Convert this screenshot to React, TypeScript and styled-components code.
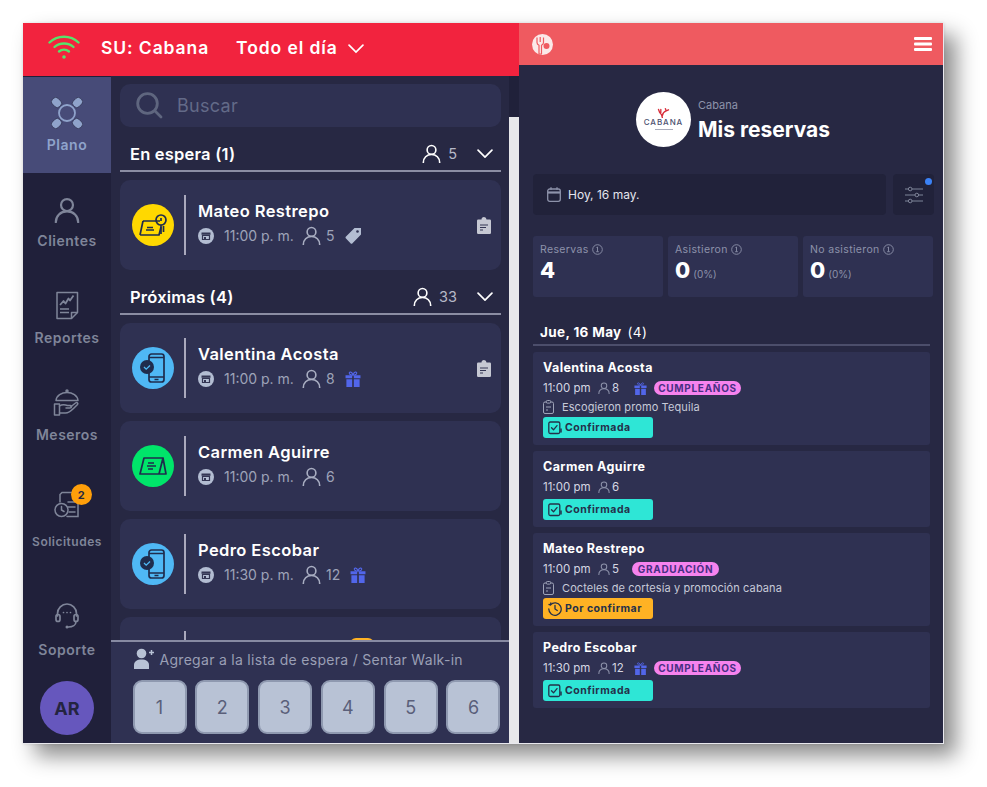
import React from 'react'
import styled, { createGlobalStyle } from 'styled-components'

const GlobalStyle = createGlobalStyle`
  html, body { margin: 0; padding: 0; background: #fff; }
  body { font-family: Inter, "Open Sans", sans-serif; }
  * { box-sizing: border-box; }
`

const Page = styled.div`
  width: 987px;
  height: 787px;
  padding: 23px 0 0 23px;
  overflow: hidden;
`

const Shell = styled.div`
  width: 921px;
  height: 721px;
  display: flex;
  border-right: 1px solid #e8e8ee;
  border-bottom: 1px solid #e8e8ee;
  box-shadow: 12px 12px 20px rgba(0, 0, 0, 0.45), 0 0 3px rgba(0, 0, 0, 0.12);
`

const LeftPanel = styled.section`
  width: 496px;
  display: flex;
  flex-direction: column;
  background: #20213a;
`

const TopBar = styled.header`
  height: 53px;
  flex: none;
  display: flex;
  align-items: center;
  padding: 0 0 5px 25px;
  background: #f2233e;
  color: #fff;
  font-weight: 600;
  font-size: 17.5px;
`

const TopLabel = styled.span<{ $left: number }>`
  margin-left: ${({ $left }) => $left}px;
  letter-spacing: 0.9px;
`

const Body = styled.div`
  flex: 1;
  min-height: 0;
  display: flex;
`

const Sidebar = styled.nav`
  width: 88px;
  flex: none;
  padding-top: 1px;
  display: flex;
  flex-direction: column;
  align-items: stretch;
  background: #20203a;
`

const NavItem = styled.div<{ $active?: boolean; $height: number; $small?: boolean; $gap: number; $pad: number }>`
  position: relative;
  height: ${({ $height }) => $height}px;
  padding-top: ${({ $pad }) => $pad}px;
  display: flex;
  flex-direction: column;
  align-items: center;
  justify-content: center;
  gap: ${({ $gap }) => $gap}px;
  font-size: ${({ $small }) => ($small ? 12 : 14)}px;
  font-weight: 600;
  letter-spacing: 0.5px;
  background: ${({ $active }) => ($active ? '#474b78' : 'transparent')};
  color: ${({ $active }) => ($active ? '#8fa3cb' : '#7f8599')};
`

const NavBadge = styled.span`
  position: absolute;
  top: 20px;
  left: 48px;
  width: 21px;
  height: 21px;
  border-radius: 50%;
  display: flex;
  align-items: center;
  justify-content: center;
  background: #ff9f0a;
  color: #272843;
  font-size: 11px;
  font-weight: 700;
`

const Avatar = styled.div`
  width: 54px;
  height: 54px;
  margin: auto auto 8px;
  border-radius: 50%;
  display: flex;
  align-items: center;
  justify-content: center;
  background: #6657bd;
  color: #24243f;
  font-size: 18px;
  font-weight: 700;
`

const MainColumn = styled.div`
  width: 398px;
  flex: none;
  display: flex;
  flex-direction: column;
  min-height: 0;
  background: #272843;
`

const ListArea = styled.div`
  flex: 1;
  min-height: 0;
  overflow: hidden;
  padding: 8px 8px 0 9px;
`

const SearchBox = styled.div`
  height: 43px;
  display: flex;
  align-items: center;
  gap: 14px;
  padding-left: 16px;
  border-radius: 10px;
  background: #2f3152;
  color: #636a88;
  font-size: 18px;
  letter-spacing: 0.3px;
`

const SectionHead = styled.div`
  height: 37px;
  margin-top: 8px;
  display: flex;
  align-items: center;
  padding: 2px 8px 0 10px;
  border-bottom: 2px solid #8b8da3;
  color: #fff;
`

const SectionTitle = styled.span`
  flex: 1;
  font-size: 16.5px;
  font-weight: 600;
  letter-spacing: 0.2px;
`

const SectionCount = styled.span`
  margin: 0 20px 0 7px;
  color: #b6b9c8;
  font-size: 14.5px;
`

const ReservationCard = styled.article`
  position: relative;
  height: 90px;
  margin-top: 8px;
  display: flex;
  align-items: center;
  padding: 0 10px 0 12px;
  border-radius: 10px;
  background: #2f3152;
`

const StatusDot = styled.div<{ $color: string }>`
  width: 42px;
  height: 42px;
  flex: none;
  border-radius: 50%;
  display: flex;
  align-items: center;
  justify-content: center;
  background: ${({ $color }) => $color};
`

const VLine = styled.div`
  width: 2px;
  height: 60px;
  flex: none;
  margin: 0 12px 0 10px;
  background: #aaa9bd;
`

const CardText = styled.div`
  flex: 1;
  display: flex;
  flex-direction: column;
  gap: 4px;
  padding-bottom: 4px;
`

const GuestName = styled.div`
  color: #fff;
  font-size: 16.5px;
  font-weight: 600;
  line-height: 21px;
  letter-spacing: 0.4px;
`

const GuestMeta = styled.div`
  display: flex;
  align-items: center;
  height: 20px;
  color: #9ea3b8;
  font-size: 14px;
`

const MetaTime = styled.span`
  width: 78px;
  margin-left: 10px;
  white-space: nowrap;
`

const MetaCount = styled.span`
  margin: 0 10px 0 5px;
`

const ClippedCard = styled(ReservationCard)`
  align-items: flex-start;
  padding-top: 14px;
`

const PeekPill = styled.span`
  position: absolute;
  left: 230px;
  top: 21px;
  width: 24px;
  height: 12px;
  border-radius: 6px;
  background: #ffb224;
`

const Scrollbar = styled.div`
  width: 10px;
  flex: none;
  margin-top: 41px;
  background: #e7e7ea;
`

const Footer = styled.div`
  height: 103px;
  flex: none;
  padding: 5px 8px 0 21.5px;
  border-top: 2px solid #878aa2;
  background: #2f3152;
`

const FooterLabel = styled.div`
  height: 24px;
  display: flex;
  align-items: center;
  gap: 5px;
  color: #9a9fb5;
  font-size: 14px;
  letter-spacing: 0.29px;
  white-space: nowrap;
`

const TableRow = styled.div`
  margin-top: 9px;
  display: flex;
  gap: 8.8px;
`

const TableButton = styled.div`
  width: 54px;
  height: 54px;
  padding-top: 1px;
  display: flex;
  align-items: center;
  justify-content: center;
  border: 2px solid #8f99b0;
  border-radius: 9px;
  background: #b8c2d5;
  color: #5a5f7a;
  font-size: 18px;
`

const RightPanel = styled.section`
  flex: 1;
  display: flex;
  flex-direction: column;
  background: #272843;
`

const RightBar = styled.header`
  height: 42px;
  flex: none;
  display: flex;
  align-items: center;
  justify-content: space-between;
  padding: 0 11px 0 13px;
  background: #ef5a60;
`

const RightBody = styled.div`
  padding: 27px 9px 0 14px;
`

const Hero = styled.div`
  display: flex;
  align-items: center;
  gap: 7px;
  margin-left: 103px;
`

const LogoCircle = styled.div`
  width: 55px;
  height: 55px;
  flex: none;
  border-radius: 50%;
  display: flex;
  flex-direction: column;
  align-items: center;
  padding-top: 15px;
  background: #fff;
  color: #4c5170;
  font-size: 8px;
  font-weight: 500;
  letter-spacing: 0.9px;
  line-height: 9px;

  &::after {
    content: '';
    width: 18px;
    height: 1px;
    margin-top: 2px;
    background: #a9acbb;
  }
`

const HeroText = styled.div`
  margin-top: 2px;
`

const HeroSub = styled.div`
  color: #8d92aa;
  font-size: 11px;
`

const HeroTitle = styled.h1`
  margin: 5px 0 0;
  color: #fff;
  font-size: 21px;
  font-weight: 700;
  line-height: 26px;
`

const FilterRow = styled.div`
  display: flex;
  gap: 7px;
  margin-top: 27px;
`

const DateField = styled.div`
  width: 353px;
  height: 41px;
  display: flex;
  align-items: center;
  gap: 7px;
  padding-left: 14px;
  border-radius: 4px;
  background: #21223a;
  color: #e4e5ee;
  font-size: 12px;
`

const FilterButton = styled.div`
  position: relative;
  width: 41px;
  height: 41px;
  display: flex;
  align-items: center;
  justify-content: center;
  border-radius: 4px;
  background: #21223a;
`

const BlueDot = styled.span`
  position: absolute;
  top: 4px;
  right: 2px;
  width: 7px;
  height: 7px;
  border-radius: 50%;
  background: #3b82f6;
`

const StatsRow = styled.div`
  display: flex;
  gap: 5px;
  margin-top: 21px;
`

const StatCard = styled.div`
  width: 130px;
  height: 61px;
  padding: 7px 7px 0;
  border-radius: 3px;
  background: #2f3152;
`

const StatLabel = styled.div`
  display: flex;
  align-items: center;
  gap: 3px;
  color: #8d92aa;
  font-size: 10.5px;
  letter-spacing: 0.35px;
  line-height: 13px;
`

const StatValue = styled.div`
  margin-top: 2px;
  color: #fff;
  font-size: 22px;
  font-weight: 800;
  line-height: 24px;
  small {
    margin-left: 3px;
    color: #8d92aa;
    font-size: 10px;
    font-weight: 400;
  }
`

const DayHead = styled.div`
  height: 27px;
  width: 397px;
  margin-top: 22px;
  padding: 3px 0 0 7px;
  border-bottom: 2px solid #4c4e6b;
  color: #fff;
  font-size: 13.5px;
  font-weight: 700;
  letter-spacing: 0.35px;
  line-height: 20px;
  span {
    margin-left: 6px;
    font-weight: 400;
  }
`

const BookingList = styled.div`
  width: 397px;
  margin-top: 6px;
  display: flex;
  flex-direction: column;
  gap: 6px;
`

const Booking = styled.article`
  padding: 8px 10px 7px;
  border-radius: 3px;
  background: #2f3152;
`

const BookingName = styled.div`
  color: #fff;
  font-size: 12.5px;
  font-weight: 700;
  letter-spacing: 0.4px;
  line-height: 15px;
`

const BookingMeta = styled.div`
  height: 20px;
  margin-top: 3px;
  display: flex;
  align-items: center;
  color: #d5d7e2;
  font-size: 11.5px;
`

const BookingTime = styled.span`
  width: 55px;
  white-space: nowrap;
`

const BookingCount = styled.span<{ $width: number }>`
  width: ${({ $width }) => $width}px;
  margin-left: 2px;
`

const EventPill = styled.span`
  min-width: 87px;
  height: 14px;
  margin-left: 7px;
  padding: 0 4px;
  display: flex;
  align-items: center;
  justify-content: center;
  border-radius: 7px;
  background: #f683ee;
  color: #4a2f84;
  font-size: 10px;
  font-weight: 700;
  letter-spacing: 0.7px;
`

const BookingNote = styled.div`
  height: 17px;
  display: flex;
  align-items: center;
  gap: 8px;
  color: #c7cad8;
  font-size: 11px;
  letter-spacing: 0.1px;
`

const StatusBadge = styled.div<{ $color: string }>`
  width: 110px;
  height: 21px;
  margin-top: 2px;
  padding-left: 5px;
  display: flex;
  align-items: center;
  gap: 3px;
  border-radius: 3px;
  background: ${({ $color }) => $color};
  color: #24304a;
  font-size: 10.5px;
  font-weight: 700;
  letter-spacing: 0.5px;
`

type IconProps = { size?: number; color?: string }

const UserIcon = ({ size = 20, color = '#fff' }: IconProps) => (
  <svg width={size} height={size} viewBox="0 0 20 20" fill="none" stroke={color} strokeWidth="1.7">
    <circle cx="10" cy="6.2" r="4.6" />
    <path d="M1.4 19.5c0-5 3.6-8.4 8.6-8.4s8.6 3.4 8.6 8.4" strokeLinecap="round" />
  </svg>
)

const Chevron = ({ size = 16 }: IconProps) => (
  <svg width={size} height={size * 0.62} viewBox="0 0 16 10" fill="none" stroke="#fff" strokeWidth="1.7" strokeLinecap="round">
    <path d="M1 1.2l7 7 7-7" />
  </svg>
)

const WifiIcon = () => (
  <svg width="32" height="26" viewBox="0 0 32 26" fill="none" stroke="#56e36b" strokeWidth="2.4" strokeLinecap="round">
    <path d="M1.5 8.5C9.5 .8 22.500 .8 30.500 8.500" />
    <path d="M6.500 13C11.500 8.300 20.500 8.300 25.500 13" />
    <path d="M11 17.500c2.800-2.500 7.200-2.500 10 0" />
    <circle cx="16" cy="23" r="1.800" fill="#56e36b" stroke="none" />
  </svg>
)

const SearchIcon = () => (
  <svg width="27" height="27" viewBox="0 0 27 27" fill="none" stroke="#5f667f" strokeWidth="2.800" strokeLinecap="round">
    <circle cx="11.500" cy="11.500" r="9.800" />
    <path d="M19 19l6 6" />
  </svg>
)

const TableIcon = () => (
  <svg width="32" height="32" viewBox="0 0 32 32" fill="none" stroke="#8fa3cb" strokeWidth="1.800">
    <circle cx="16" cy="16" r="8" />
    <g fill="#8fa3cb" stroke="#20203a" strokeWidth=".6">
      <rect x="-5" y="-4" width="10" height="8" rx="3" transform="translate(5.500 5.500) rotate(45)" />
      <rect x="-5" y="-4" width="10" height="8" rx="3" transform="translate(26.500 5.500) rotate(-45)" />
      <rect x="-5" y="-4" width="10" height="8" rx="3" transform="translate(5.500 26.500) rotate(-45)" />
      <rect x="-5" y="-4" width="10" height="8" rx="3" transform="translate(26.500 26.500) rotate(45)" />
    </g>
  </svg>
)

const ReportIcon = () => (
  <svg width="24" height="29" viewBox="0 0 24 29" fill="none" stroke="#7f8599" strokeWidth="1.500" strokeLinejoin="round">
    <path d="M2 1.500h20.500v20l-6 6H2z" />
    <path d="M16.500 27.500v-6h6" />
    <path d="M5 14l3.500-4 2 2.500 3-5 1.500 2 3.500-5" strokeWidth="1.800" />
    <path d="M5 18h9M5 21.500h9" />
  </svg>
)

const WaiterIcon = () => (
  <svg width="28" height="28" viewBox="0 0 28 28" fill="none" stroke="#7f8599" strokeWidth="1.500" strokeLinecap="round" strokeLinejoin="round">
    <path d="M3 11.500C3.500 6.500 8.500 3.500 14 3.500s10.500 3 11 8z" />
    <circle cx="14" cy="2" r="1" />
    <path d="M1.500 15h5v11h-5z" />
    <path d="M6.500 17c3-2 5-1.500 8-.5h3c1.500 0 1.500 2.500-.500 2.500h-4" />
    <path d="M6.500 24h6c3 0 5.500-2 8-4.500l4-4c1-1.500-.5-2.500-2-1.500l-5 4" />
  </svg>
)

const RequestIcon = () => (
  <svg width="26" height="27" viewBox="0 0 26 27" fill="none" stroke="#7f8599" strokeWidth="1.500" strokeLinecap="round">
    <path d="M6 11V3.500l2-2h16v24H13" />
    <path d="M14 11h7M14 16h7M15 21h6" />
    <circle cx="7.500" cy="19" r="6.500" />
    <path d="M7.500 15.500V19l2.500 1.500" />
  </svg>
)

const HeadsetIcon = () => (
  <svg width="24" height="26" viewBox="0 0 24 26" fill="none" stroke="#7f8599" strokeWidth="1.700" strokeLinecap="round">
    <path d="M2.500 13V10.500a9.500 9.500 0 0 1 19 0V13" />
    <rect x="1" y="11.500" width="4" height="7" rx="2" />
    <rect x="19" y="11.500" width="4" height="7" rx="2" />
    <path d="M21 18.500c0 3.500-3.500 5.500-7.500 5.500" />
    <circle cx="12" cy="24" r="1.500" fill="#7f8599" stroke="none" />
    <path d="M8.500 9.500h.01M12 9.500h.01M15.500 9.500h.01" />
  </svg>
)

const StoreIcon = () => (
  <svg width="16" height="16" viewBox="0 0 16 16">
    <circle cx="8" cy="8" r="8" fill="#b3bdd2" />
    <path d="M3.500 4.500h9v2.300h-9z" fill="#343654" />
    <path d="M4.500 7.500h7v4h-7z" fill="none" stroke="#343654" strokeWidth="1.200" />
    <path d="M6 9h2v2.500H6z" fill="#343654" />
  </svg>
)

const TagIcon = () => (
  <svg width="17" height="17" viewBox="0 0 17 17" fill="#b3bdd2">
    <path d="M9.500 1H16v6.500l-8.500 8.800a1.400 1.400 0 0 1-2 0L1 11.500a1.400 1.400 0 0 1 0-2z" />
    <circle cx="12.500" cy="4.500" r="1.300" fill="#2f3152" />
  </svg>
)

const GiftIcon = ({ size = 16 }: IconProps) => (
  <svg width={size} height={size} viewBox="0 0 15 15" fill="#5266ea">
    <path d="M0.500 4h6.200v2.800H0.500zM8.300 4h6.200v2.800H8.300zM1.300 7.800h5.400V15H1.300zM8.300 7.800h5.400V15H8.300z" />
    <path d="M7.500 3.700C5.500 3.700 4 3 4 1.800c0-1.300 2.500-1.300 3.500 1.900 1-3.200 3.500-3.200 3.500-1.900 0 1.200-1.500 1.900-3.500 1.900z" fill="none" stroke="#5266ea" />
  </svg>
)

const ClipboardSolid = () => (
  <svg width="14" height="17" viewBox="0 0 14 17">
    <path d="M1.200 2.500h3.300a2.500 2.500 0 0 1 5 0h3.300A1.200 1.200 0 0 1 14 3.700v12.100a1.200 1.200 0 0 1-1.200 1.200H1.200A1.200 1.200 0 0 1 0 15.800V3.700a1.200 1.200 0 0 1 1.200-1.200z" fill="#c6c8d3" />
    <path d="M3 8h8M3 10.500h6M3 13h3" stroke="#343654" strokeWidth="1.200" />
  </svg>
)

const NoteIcon = () => (
  <svg width="11" height="14" viewBox="0 0 11 14" fill="none" stroke="#9ea3b8" strokeWidth="1">
    <rect x=".5" y="2" width="10" height="11.500" rx="1.500" />
    <rect x="3.300" y=".5" width="4.400" height="2.600" rx="1" fill="#2f3152" />
    <path d="M3 7h5M3 10h2" />
  </svg>
)

const InfoIcon = () => (
  <svg width="11" height="11" viewBox="0 0 11 11" fill="none" stroke="#8d92aa" strokeWidth=".9">
    <circle cx="5.500" cy="5.500" r="4.800" />
    <path d="M4.500 3.500l1-.5v4.500M4.200 7.700h2.600" />
  </svg>
)

const CalendarIcon = () => (
  <svg width="14" height="15" viewBox="0 0 14 15" fill="none" stroke="#8d92aa" strokeWidth="1.300">
    <rect x=".7" y="2" width="12.600" height="12.300" rx="2" />
    <path d="M.7 5.500h12.600" strokeWidth="2.200" />
    <path d="M4 .3v2.500M10 .3v2.500" />
  </svg>
)

const SlidersIcon = () => (
  <svg width="18" height="18" viewBox="0 0 18 18" fill="none" stroke="#7f8599" strokeWidth="1">
    <path d="M0 3h3.500M7 3h11M0 9h10M13.500 9H18M0 15h3.500M7 15h11" />
    <circle cx="5.200" cy="3" r="1.800" />
    <circle cx="11.800" cy="9" r="1.800" />
    <circle cx="5.200" cy="15" r="1.800" />
  </svg>
)

const CheckBadgeIcon = () => (
  <svg width="14" height="14" viewBox="0 0 14 14" fill="none" stroke="#24304a" strokeWidth="1.300" strokeLinejoin="round">
    <rect x=".8" y="1" width="11" height="11.500" rx="1.500" />
    <path d="M3.500 6.800l2 2 3.500-4.200" strokeLinecap="round" />
    <path d="M13 7.500v4" strokeWidth="1.500" />
  </svg>
)

const ClockBadgeIcon = () => (
  <svg width="14" height="14" viewBox="0 0 14 14" fill="none" stroke="#24304a" strokeWidth="1.300" strokeLinecap="round">
    <path d="M2.500 2.800A6.200 6.200 0 1 1 .8 7" />
    <path d="M7 3.500V7l2.300 1.500" />
    <path d="M1 2.500l1.500.3.300-1.800" />
  </svg>
)

const PhoneGlyph = () => (
  <svg width="28" height="30" viewBox="0 0 28 30" fill="none" stroke="#1f2c4d" strokeWidth="1.700">
    <rect x="10" y="1" width="15" height="28" rx="2.500" />
    <path d="M10 4.500h15M10 24h15M15.500 26.500h4" />
    <circle cx="8" cy="14" r="7" fill="#1f2c4d" stroke="none" />
    <path d="M5 14l2.200 2.200L11 12.500" stroke="#4fb8f5" strokeWidth="1.300" />
  </svg>
)

const TentCard = ({ extra }: { extra?: boolean }) => (
  <svg width="28" height="26" viewBox="0 0 28 26" fill="none" stroke="#1f2c4d" strokeWidth="1.700" strokeLinejoin="round">
    <path d={extra ? 'M4 9h17M1 23l3-14M1 23h19l2-8' : 'M5 5h19L20 21H1zM24 5l3 16h-7'} />
    <path d={extra ? 'M7 18h8M8 15.500h6' : 'M8 13h9M9 10h6M9 16h5'} />
    {extra && <circle cx="22" cy="8" r="5" />}
    {extra && <path d="M22 13v9M24.500 14v6M22 6v3" />}
  </svg>
)

const CabanaMark = () => (
  <svg width="13" height="11" viewBox="0 0 17 14" fill="none" stroke="#d8303d" strokeWidth="1.800" strokeLinecap="round">
    <path d="M7 14c0-4-1-5-3.500-7M3.500 7L2 3M7 11c.5-3 2-5 5-6M12 5l-1-3M12 5l3-1.500M5 7V3" />
  </svg>
)

const ForkLogo = () => (
  <svg width="21" height="21" viewBox="0 0 21 21">
    <circle cx="10.500" cy="10.500" r="10.500" fill="#fbe9e9" />
    <path d="M5 3.500v5c0 1.500 1 2.300 2 2.800V20h2.500v-8.700c1-.5 2-1.300 2-2.800v-5" stroke="#ef5a60" strokeWidth="1.200" fill="none" />
    <path d="M8.200 3v5" stroke="#ef5a60" strokeWidth="1.200" />
    <circle cx="14.500" cy="12" r="3" fill="#ef5a60" />
  </svg>
)

const HamburgerIcon = () => (
  <svg width="18" height="14" viewBox="0 0 18 14" fill="#fff">
    <rect y="0" width="18" height="3" rx="1" />
    <rect y="5.500" width="18" height="3" rx="1" />
    <rect y="11" width="18" height="3" rx="1" />
  </svg>
)

const AddUserIcon = () => (
  <svg width="22" height="22" viewBox="0 0 22 22" fill="#b8c2d5">
    <circle cx="8.500" cy="5.500" r="4.800" />
    <path d="M1 21v-4c0-3.500 3-5.500 7.500-5.500S16 13.500 16 17v4z" />
    <path d="M16 4.500h5M18.500 2v5" stroke="#b8c2d5" strokeWidth="1.500" />
  </svg>
)

const navItems = [
  { label: 'Plano', height: 96, gap: 7, pad: 0, icon: <TableIcon />, active: true },
  { label: 'Clientes', height: 97, gap: 9, pad: 2, icon: <UserIcon size={26} color="#7f8599" /> },
  { label: 'Reportes', height: 97, gap: 9, pad: 0, icon: <ReportIcon /> },
  { label: 'Meseros', height: 97, gap: 9, pad: 0, icon: <WaiterIcon /> },
  { label: 'Solicitudes', height: 112, gap: 16, pad: 0, icon: <RequestIcon />, badge: '2', small: true },
  { label: 'Soporte', height: 105, gap: 12, pad: 3, icon: <HeadsetIcon /> },
]

const yellow = '#ffd800'
const blue = '#4fb8f5'
const green = '#00e56a'

const waiting = [
  { name: 'Mateo Restrepo', time: '11:00 p. m.', count: 5, color: yellow, glyph: <TentCard extra />, extra: <TagIcon />, note: true },
]

const upcoming = [
  { name: 'Valentina Acosta', time: '11:00 p. m.', count: 8, color: blue, glyph: <PhoneGlyph />, extra: <GiftIcon />, note: true },
  { name: 'Carmen Aguirre', time: '11:00 p. m.', count: 6, color: green, glyph: <TentCard /> },
  { name: 'Pedro Escobar', time: '11:30 p. m.', count: 12, color: blue, glyph: <PhoneGlyph />, extra: <GiftIcon /> },
]

const stats = [
  { label: 'Reservas', value: '4' },
  { label: 'Asistieron', value: '0', pct: '(0%)' },
  { label: 'No asistieron', value: '0', pct: '(0%)' },
]

const teal = '#2ee6d6'
const amber = '#ffb224'

const bookings = [
  { name: 'Valentina Acosta', time: '11:00 pm', count: '8', gift: true, pill: 'CUMPLEAÑOS', note: 'Escogieron promo Tequila', status: 'Confirmada', color: teal },
  { name: 'Carmen Aguirre', time: '11:00 pm', count: '6', status: 'Confirmada', color: teal },
  { name: 'Mateo Restrepo', time: '11:00 pm', count: '5', pill: 'GRADUACIÓN', note: 'Cocteles de cortesía y promoción cabana', status: 'Por confirmar', color: amber },
  { name: 'Pedro Escobar', time: '11:30 pm', count: '12', gift: true, pill: 'CUMPLEAÑOS', status: 'Confirmada', color: teal },
]

type Guest = (typeof waiting)[number] | (typeof upcoming)[number]

const GuestCard = ({ guest }: { guest: Guest }) => (
  <ReservationCard>
    <StatusDot $color={guest.color}>{guest.glyph}</StatusDot>
    <VLine />
    <CardText>
      <GuestName>{guest.name}</GuestName>
      <GuestMeta>
        <StoreIcon />
        <MetaTime>{guest.time}</MetaTime>
        <UserIcon size={19} color="#a9aec2" />
        <MetaCount>{guest.count}</MetaCount>
        {guest.extra}
      </GuestMeta>
    </CardText>
    {'note' in guest && guest.note && <ClipboardSolid />}
  </ReservationCard>
)

const App = () => {
  return (
    <Page>
      <GlobalStyle />
      <Shell>
        <LeftPanel>
          <TopBar>
            <WifiIcon />
            <TopLabel $left={21}>SU: Cabana</TopLabel>
            <TopLabel $left={27}>Todo el día</TopLabel>
            <TopLabel $left={10}>
              <Chevron />
            </TopLabel>
          </TopBar>
          <Body>
            <Sidebar>
              {navItems.map(item => (
                <NavItem
                  key={item.label}
                  $active={item.active}
                  $height={item.height}
                  $small={item.small}
                  $gap={item.gap}
                  $pad={item.pad}
                >
                  {item.icon}
                  {item.badge && <NavBadge>{item.badge}</NavBadge>}
                  {item.label}
                </NavItem>
              ))}
              <Avatar>AR</Avatar>
            </Sidebar>
            <MainColumn>
              <ListArea>
                <SearchBox>
                  <SearchIcon />
                  Buscar
                </SearchBox>
                <SectionHead>
                  <SectionTitle>En espera (1)</SectionTitle>
                  <UserIcon size={19} />
                  <SectionCount>5</SectionCount>
                  <Chevron />
                </SectionHead>
                {waiting.map(guest => (
                  <GuestCard key={guest.name} guest={guest} />
                ))}
                <SectionHead>
                  <SectionTitle>Próximas (4)</SectionTitle>
                  <UserIcon size={19} />
                  <SectionCount>33</SectionCount>
                  <Chevron />
                </SectionHead>
                {upcoming.map(guest => (
                  <GuestCard key={guest.name} guest={guest} />
                ))}
                <ClippedCard>
                  <StatusDot $color="transparent" />
                  <VLine />
                  <PeekPill />
                </ClippedCard>
              </ListArea>
              <Footer>
                <FooterLabel>
                  <AddUserIcon />
                  Agregar a la lista de espera / Sentar Walk-in
                </FooterLabel>
                <TableRow>
                  {[1, 2, 3, 4, 5, 6].map(n => (
                    <TableButton key={n}>{n}</TableButton>
                  ))}
                </TableRow>
              </Footer>
            </MainColumn>
            <Scrollbar />
          </Body>
        </LeftPanel>
        <RightPanel>
          <RightBar>
            <ForkLogo />
            <HamburgerIcon />
          </RightBar>
          <RightBody>
            <Hero>
              <LogoCircle>
                <CabanaMark />
                CABANA
              </LogoCircle>
              <HeroText>
                <HeroSub>Cabana</HeroSub>
                <HeroTitle>Mis reservas</HeroTitle>
              </HeroText>
            </Hero>
            <FilterRow>
              <DateField>
                <CalendarIcon />
                Hoy, 16 may.
              </DateField>
              <FilterButton>
                <SlidersIcon />
                <BlueDot />
              </FilterButton>
            </FilterRow>
            <StatsRow>
              {stats.map(stat => (
                <StatCard key={stat.label}>
                  <StatLabel>
                    {stat.label}
                    <InfoIcon />
                  </StatLabel>
                  <StatValue>
                    {stat.value}
                    {stat.pct && <small>{stat.pct}</small>}
                  </StatValue>
                </StatCard>
              ))}
            </StatsRow>
            <DayHead>
              Jue, 16 May<span>(4)</span>
            </DayHead>
            <BookingList>
              {bookings.map(booking => (
                <Booking key={booking.name}>
                  <BookingName>{booking.name}</BookingName>
                  <BookingMeta>
                    <BookingTime>{booking.time}</BookingTime>
                    <UserIcon size={12} color="#8d92aa" />
                    <BookingCount $width={booking.gift ? 22 : 13}>{booking.count}</BookingCount>
                    {booking.gift && <GiftIcon size={13} />}
                    {booking.pill && <EventPill>{booking.pill}</EventPill>}
                  </BookingMeta>
                  {booking.note && (
                    <BookingNote>
                      <NoteIcon />
                      {booking.note}
                    </BookingNote>
                  )}
                  <StatusBadge $color={booking.color}>
                    {booking.color === teal ? <CheckBadgeIcon /> : <ClockBadgeIcon />}
                    {booking.status}
                  </StatusBadge>
                </Booking>
              ))}
            </BookingList>
          </RightBody>
        </RightPanel>
      </Shell>
    </Page>
  )
}

export default App
